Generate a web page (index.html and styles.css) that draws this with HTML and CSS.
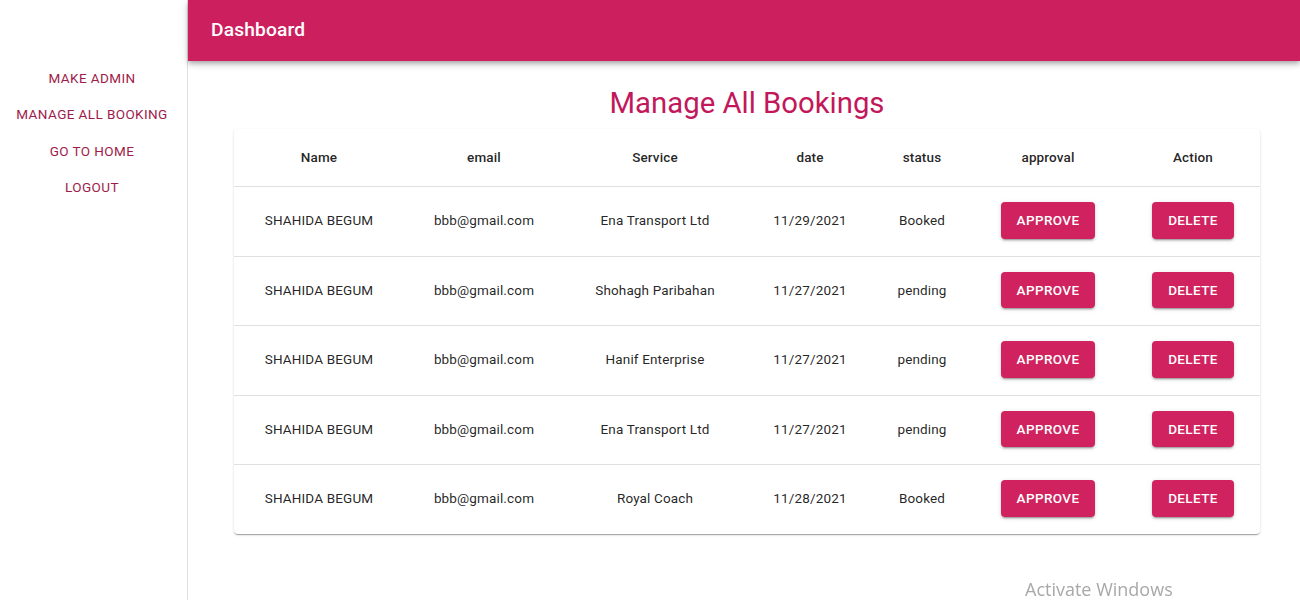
FILE: index.html
```html
<!DOCTYPE html>
<html>
<head>
<meta charset="utf-8">
<link rel="stylesheet" href="styles.css">
</head>
<body>
<div class="layout">
  <aside class="sidebar">
    <nav class="nav">
      <a class="nav-link" href="#">Make Admin</a>
      <a class="nav-link" href="#">Manage All Booking</a>
      <a class="nav-link" href="#">Go to Home</a>
      <a class="nav-link" href="#">Logout</a>
    </nav>
  </aside>
  <div class="main">
    <header class="appbar">
      <h1 class="appbar-title">Dashboard</h1>
    </header>
    <section class="content">
      <h2 class="page-title">Manage All Bookings</h2>
      <div class="paper">
        <table class="table">
          <thead>
            <tr>
              <th class="c-name">Name</th>
              <th class="c-email">email</th>
              <th class="c-service">Service</th>
              <th class="c-date">date</th>
              <th class="c-status">status</th>
              <th class="c-approval">approval</th>
              <th class="c-action">Action</th>
            </tr>
          </thead>
          <tbody>
            <tr>
              <td>SHAHIDA BEGUM</td><td>bbb@gmail.com</td><td>Ena Transport Ltd</td><td>11/29/2021</td><td>Booked</td>
              <td><button class="btn">Approve</button></td><td><button class="btn">Delete</button></td>
            </tr>
            <tr>
              <td>SHAHIDA BEGUM</td><td>bbb@gmail.com</td><td>Shohagh Paribahan</td><td>11/27/2021</td><td>pending</td>
              <td><button class="btn">Approve</button></td><td><button class="btn">Delete</button></td>
            </tr>
            <tr>
              <td>SHAHIDA BEGUM</td><td>bbb@gmail.com</td><td>Hanif Enterprise</td><td>11/27/2021</td><td>pending</td>
              <td><button class="btn">Approve</button></td><td><button class="btn">Delete</button></td>
            </tr>
            <tr>
              <td>SHAHIDA BEGUM</td><td>bbb@gmail.com</td><td>Ena Transport Ltd</td><td>11/27/2021</td><td>pending</td>
              <td><button class="btn">Approve</button></td><td><button class="btn">Delete</button></td>
            </tr>
            <tr>
              <td>SHAHIDA BEGUM</td><td>bbb@gmail.com</td><td>Royal Coach</td><td>11/28/2021</td><td>Booked</td>
              <td><button class="btn">Approve</button></td><td><button class="btn">Delete</button></td>
            </tr>
          </tbody>
        </table>
      </div>
    </section>
  </div>
</div>
<div class="watermark">Activate Windows</div>
</body>
</html>
```
FILE: styles.css
```css
* { box-sizing: border-box; }
html, body {
  margin: 0;
  padding: 0;
  background: #fff;
  font-family: Roboto, "Liberation Sans", Arial, sans-serif;
  color: rgba(0,0,0,0.87);
  overflow: hidden;
}
.layout {
  display: flex;
  height: 600px;
}
.sidebar {
  width: 188px;
  flex: none;
  border-right: 1px solid #e0e0e0;
}
.nav {
  display: flex;
  flex-direction: column;
  align-items: center;
  padding-top: 60px;
  padding-right: 3px;
}
.nav-link {
  display: block;
  font-size: 13.5px;
  font-weight: 400;
  line-height: 36.3px;
  letter-spacing: 0.03em;
  text-transform: uppercase;
  text-decoration: none;
  color: #9e1c4b;
}
.main {
  flex: 1;
  min-width: 0;
  display: flex;
  flex-direction: column;
}
.appbar {
  height: 61px;
  background: #cc1f5e;
  display: flex;
  align-items: center;
  padding-left: 23px;
  padding-bottom: 2px;
  box-shadow: 0 2px 4px -1px rgba(0,0,0,0.2), 0 4px 5px 0 rgba(0,0,0,0.14), 0 1px 10px 0 rgba(0,0,0,0.12);
  position: relative;
  z-index: 1;
}
.appbar-title {
  margin: 0;
  color: #fff;
  font-size: 19.2px;
  font-weight: 500;
  letter-spacing: 0.0075em;
}
.content {
  padding: 24px 40px 0 46px;
}
.page-title {
  margin: 0 0 8px;
  text-align: center;
  font-size: 29.3px;
  font-weight: 400;
  line-height: 36px;
  color: #c2185b;
}
.paper {
  background: #fff;
  border-radius: 4px;
  box-shadow: 0 2px 1px -1px rgba(0,0,0,0.2), 0 1px 1px 0 rgba(0,0,0,0.14), 0 1px 3px 0 rgba(0,0,0,0.12);
  overflow: hidden;
}
.table {
  width: 100%;
  border-collapse: collapse;
  table-layout: fixed;
}
.table th, .table td {
  text-align: center;
  padding: 16px;
  border-bottom: 1px solid #e0e0e0;
  font-size: 13.5px;
  letter-spacing: 0.01071em;
}
.table tbody tr:last-child td { border-bottom: none; }
.table th {
  font-weight: 500;
  line-height: 25px;
}
.table td {
  font-weight: 400;
  line-height: 20px;
  padding-top: 15px;
  padding-bottom: 17px;
}
.c-name { width: 170px; }
.c-email { width: 160px; }
.c-service { width: 182px; }
.c-date { width: 128px; }
.c-status { width: 96px; }
.c-approval { width: 156px; }
.c-action { width: 134px; }
.btn {
  font-family: Roboto, "Liberation Sans", Arial, sans-serif;
  font-size: 13.5px;
  font-weight: 500;
  line-height: 24.5px;
  letter-spacing: 0.02857em;
  text-transform: uppercase;
  color: #fff;
  background: #d0225f;
  border: none;
  border-radius: 4px;
  padding: 6px 16px;
  box-shadow: 0 3px 1px -2px rgba(0,0,0,0.2), 0 2px 2px 0 rgba(0,0,0,0.14), 0 1px 5px 0 rgba(0,0,0,0.12);
  cursor: pointer;
  vertical-align: middle;
}
.watermark {
  position: fixed;
  left: 1025px;
  top: 577px;
  font-family: "Open Sans", "DejaVu Sans", sans-serif;
  font-size: 18px;
  color: #a8a8a8;
  white-space: nowrap;
}
```
